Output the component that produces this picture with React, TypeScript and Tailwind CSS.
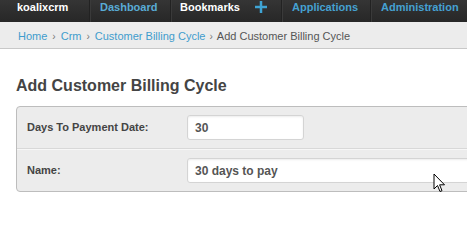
import React from "react";

function Divider() {
  return <span className="h-full w-[2px] border-l border-r border-l-[#222] border-r-[#3a3a3a]" />;
}

export default function App() {
  return (
    <div className="relative h-[228px] w-[467px] overflow-hidden bg-white font-['Liberation_Sans',Arial,sans-serif]">
      <nav className="flex h-[22px] items-start bg-gradient-to-b from-[#353535] to-[#272727] text-[11px] font-bold leading-[14px]">
        <div className="w-[89px] pl-[17px] text-white">koalixcrm</div>
        <Divider />
        <div className="w-[79px] pl-[9px] text-[#59acd6]">Dashboard</div>
        <Divider />
        <div className="flex w-[109px] items-start pl-[8px] text-white">
          <span>Bookmarks</span>
          <svg className="ml-[15px] mt-[1px]" width="12" height="12" viewBox="0 0 12 12">
            <rect x="4.75" y="0" width="2.5" height="12" fill="#3fa4d4" />
            <rect x="0" y="4.75" width="12" height="2.5" fill="#3fa4d4" />
          </svg>
        </div>
        <Divider />
        <div className="w-[87px] pl-[9px] text-[#45a1d2]">Applications</div>
        <Divider />
        <div className="whitespace-nowrap pl-[9px] text-[#45a1d2]">Administration</div>
      </nav>

      <div className="flex h-[27px] items-center border-b border-[#c8c8c8] bg-[#ececec] pl-[18px] pt-[3px] text-[11px] text-[#555]">
        <span className="text-[#3f9ccd]">Home</span>
        <span className="mx-[5px] text-[10px] text-[#777]">›</span>
        <span className="text-[#3f9ccd]">Crm</span>
        <span className="mx-[5px] text-[10px] text-[#777]">›</span>
        <span className="text-[#3f9ccd]">Customer Billing Cycle</span>
        <span className="mx-[4px] text-[10px] text-[#777]">›</span>
        <span className="whitespace-nowrap">Add Customer Billing Cycle</span>
      </div>

      <h1 className="mt-[27px] pl-[16px] text-[16px] font-bold leading-[20px] text-[#444]">
        Add Customer Billing Cycle
      </h1>

      <div className="ml-[16px] mt-[10px] w-[480px] rounded-[4px] border border-[#bdbdbd] bg-[#ececec]">
        <div className="flex h-[42px] items-center border-b border-[#d8d8d8]">
          <label className="w-[170px] pl-[10px] text-[11px] font-bold text-[#444]">Days To Payment Date:</label>
          <div className="flex h-[25px] w-[117px] items-center rounded-[3px] border border-[#d4d4d4] bg-white pl-[7px] text-[12px] font-bold text-[#555] shadow-[inset_0_1px_2px_rgba(0,0,0,0.08)]">
            30
          </div>
        </div>
        <div className="flex h-[42px] items-center border-t border-[#f7f7f7]">
          <label className="w-[170px] pl-[10px] text-[11px] font-bold text-[#444]">Name:</label>
          <div className="flex h-[25px] flex-1 items-center rounded-l-[3px] border border-[#d4d4d4] bg-white pl-[7px] text-[12px] font-bold text-[#555] shadow-[inset_0_1px_2px_rgba(0,0,0,0.08)]">
            30 days to pay
          </div>
        </div>
      </div>

      <svg className="absolute left-[433px] top-[173px]" width="13" height="21" viewBox="0 0 13 21">
        <path d="M1 1 L1 16 L4.5 12.5 L7 18.5 L9 17.7 L6.6 11.8 L11.5 11.8 Z" fill="#fff" stroke="#000" strokeWidth="1" strokeLinejoin="miter" />
      </svg>
    </div>
  );
}
